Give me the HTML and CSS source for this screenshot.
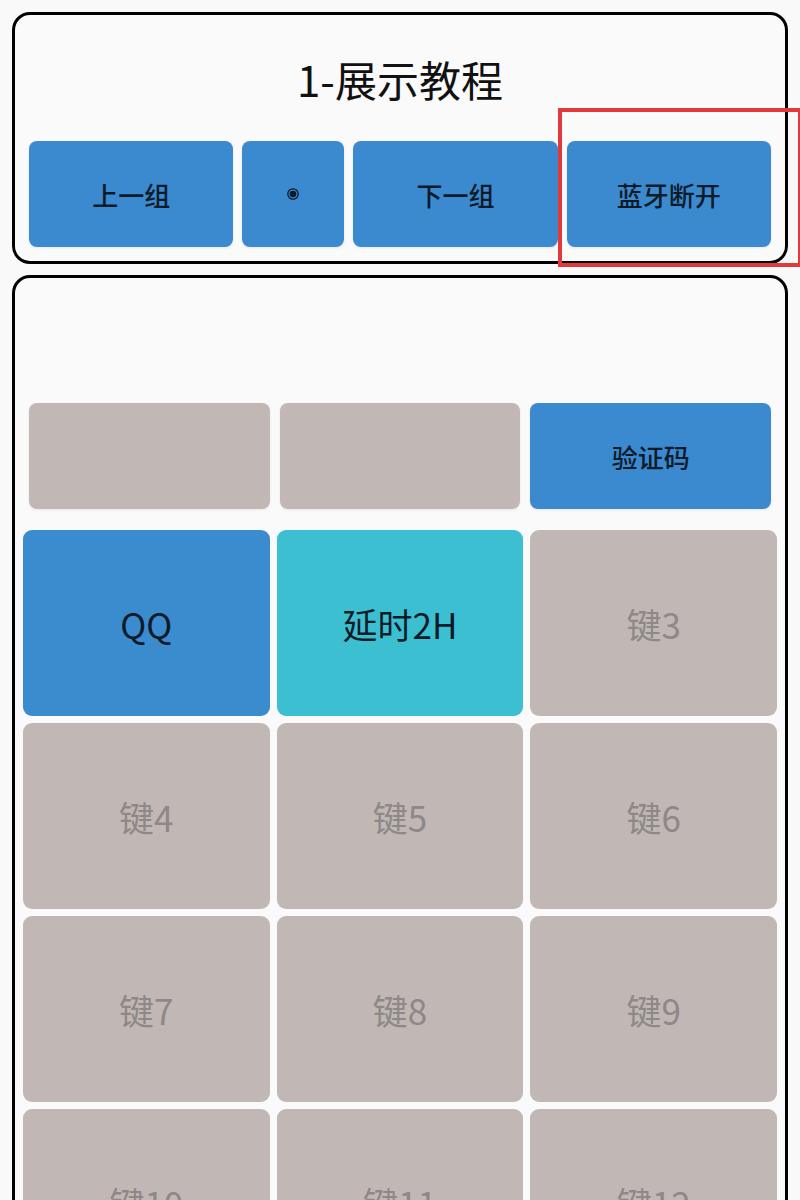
FILE: index.html
```html
<!DOCTYPE html>
<html lang="zh-CN">
<head>
    <meta charset="UTF-8">
    <meta name="viewport" content="width=device-width, initial-scale=1.0">
    <title>1-展示教程</title>
    <link rel="stylesheet" href="styles.css">
</head>
<body>
    <!-- Painel de controle -->
    <div class="card top-card">
        <div class="title">1-展示教程</div>
        <div class="nav-row">
            <button class="btn wide">上一组</button>
            <button class="btn narrow">
                <svg width="14" height="14" viewBox="0 0 14 14">
                    <circle cx="7" cy="7" r="5.2" fill="none" stroke="#0d1a28" stroke-width="1.3"/>
                    <circle cx="7" cy="7" r="3.3" fill="#0d1a28"/>
                </svg>
            </button>
            <button class="btn wide">下一组</button>
            <button class="btn wide">蓝牙断开</button>
        </div>
    </div>

    <!-- Marcação vermelha -->
    <div class="highlight"></div>

    <!-- Teclado -->
    <div class="card keys-card">
        <div class="spacer"></div>
        <div class="small-row">
            <button class="btn gray"></button>
            <button class="btn gray"></button>
            <button class="btn">验证码</button>
        </div>
        <div class="key-grid">
            <button class="key blue">QQ</button>
            <button class="key cyan">延时2H</button>
            <button class="key">键3</button>
            <button class="key">键4</button>
            <button class="key">键5</button>
            <button class="key">键6</button>
            <button class="key">键7</button>
            <button class="key">键8</button>
            <button class="key">键9</button>
            <button class="key">键10</button>
            <button class="key">键11</button>
            <button class="key">键12</button>
        </div>
    </div>
</body>
</html>
```

FILE: styles.css
```css
body {
    margin: 0;
    padding: 12px 12px 0;
    background-color: #f9f9f9;
    font-family: "Noto Sans CJK SC", "Noto Sans", sans-serif;
    color: #0d1a28;
    position: relative;
}

/* Cards */
.card {
    border: 3px solid #000;
    border-radius: 18px;
    background-color: #fafafa;
}

.top-card {
    padding: 0 14px 14px;
}

.title {
    height: 126px;
    display: flex;
    align-items: center;
    justify-content: center;
    font-size: 42px;
    color: #111;
}

.nav-row {
    display: flex;
    gap: 9px;
}

.btn {
    height: 106px;
    border: none;
    border-radius: 8px;
    background-color: #3b89cf;
    color: #0d1a28;
    font-family: inherit;
    font-size: 26px;
    font-weight: 500;
    box-shadow: 0 1px 3px rgba(0, 0, 0, 0.08);
    display: flex;
    align-items: center;
    justify-content: center;
    padding: 0;
}

.btn.wide {
    flex: 2;
}

.btn.narrow {
    flex: 1;
}

.btn.gray {
    background-color: #c1b8b6;
}

/* Red annotation box */
.highlight {
    position: absolute;
    left: 558px;
    top: 108px;
    width: 236px;
    height: 151px;
    border: 4px solid #e23a3a;
}

/* Keys card */
.keys-card {
    margin-top: 11px;
    padding: 0 8px 16px;
}

.spacer {
    height: 125px;
}

.small-row {
    display: grid;
    grid-template-columns: repeat(3, 1fr);
    gap: 10px;
    margin: 0 6px 21px;
}

.key-grid {
    display: grid;
    grid-template-columns: repeat(3, 1fr);
    gap: 7px;
}

.key {
    height: 186px;
    border: none;
    border-radius: 9px;
    background-color: #c1b8b6;
    color: #8e8886;
    font-family: inherit;
    font-size: 35px;
    padding: 0;
}

.key.blue {
    background-color: #3b8ccf;
    color: #0d1a28;
}

.key.cyan {
    background-color: #3cbfd0;
    color: #0d1a28;
}
```
